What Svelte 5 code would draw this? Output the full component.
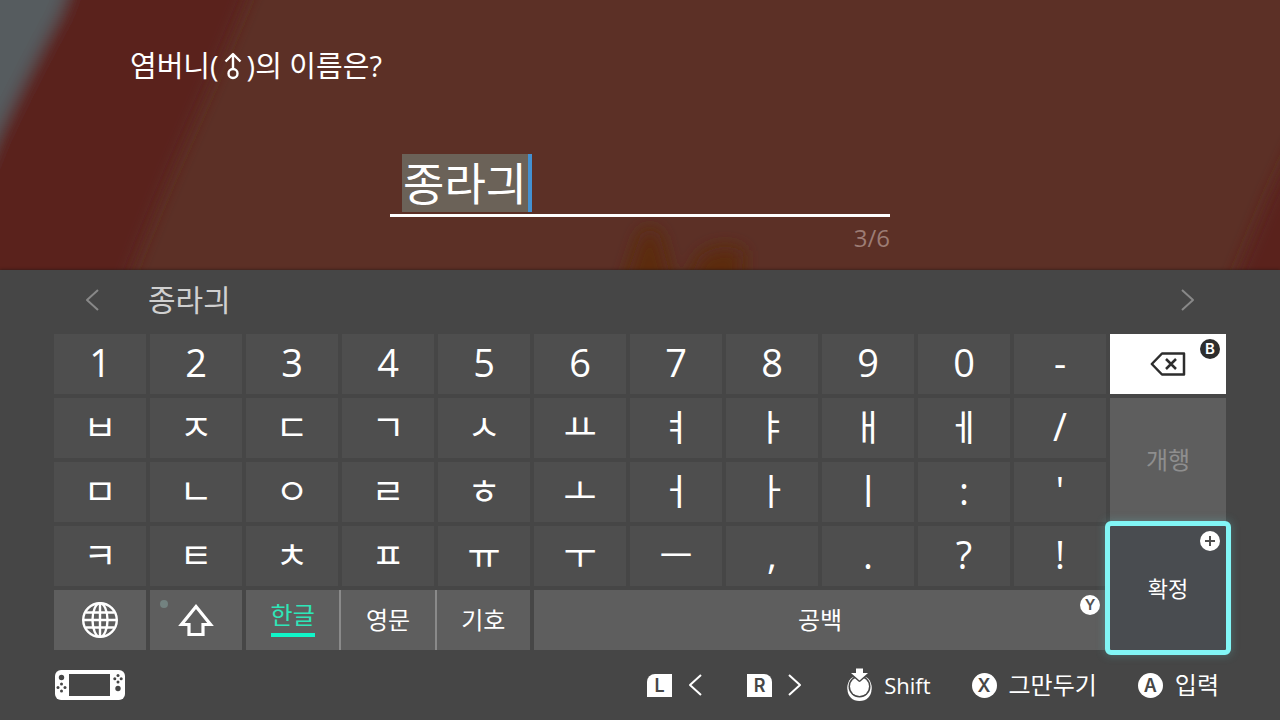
<script>
	const maxLength = 6;

	const rows = [
		['1', '2', '3', '4', '5', '6', '7', '8', '9', '0', '-'],
		['ㅂ', 'ㅈ', 'ㄷ', 'ㄱ', 'ㅅ', 'ㅛ', 'ㅕ', 'ㅑ', 'ㅐ', 'ㅔ', '/'],
		['ㅁ', 'ㄴ', 'ㅇ', 'ㄹ', 'ㅎ', 'ㅗ', 'ㅓ', 'ㅏ', 'ㅣ', ':', "'"],
		['ㅋ', 'ㅌ', 'ㅊ', 'ㅍ', 'ㅠ', 'ㅜ', 'ㅡ', ',', '.', '?', '!']
	];

	const modes = ['한글', '영문', '기호'];

	let name = $state('종라긔');
	let mode = $state('한글');

	function type(key) {
		if (name.length < maxLength) {
			name += key;
		}
	}

	function erase() {
		name = name.slice(0, -1);
	}

	function isLatin(key) {
		return key.charCodeAt(0) < 128;
	}
</script>

{#snippet chevron(d)}
	<svg class="Chevron" viewBox="0 0 22 24" aria-hidden="true"><path {d} /></svg>
{/snippet}

<main class="Screen">
	<section class="Prompt">
		<svg class="Backdrop" viewBox="0 0 1280 270" preserveAspectRatio="none" aria-hidden="true">
			<defs>
				<filter id="soft" x="-20%" y="-20%" width="140%" height="140%">
					<feGaussianBlur stdDeviation="8" />
				</filter>
			</defs>
			<rect width="1280" height="270" fill="#5c3026" />
			<g filter="url(#soft)">
				<path d="M-40-40H262Q226 50 190 130T116 310H-40z" fill="#5a231f" />
				<path d="M-40-40H80L60 14Q20 88-2 136L-40 230z" fill="#565b5e" />
				<path d="M1310 110L1270 195 1222 310H1320z" fill="#5a231f" />
				<path d="M622 290L640 236Q650 222 660 236L674 290z" fill="#5b2a0c" />
				<path d="M684 290L700 256Q722 240 744 252L740 290z" fill="#5b2a0c" />
			</g>
		</svg>

		<label class="Question" for="name">
			염버니(<svg class="Male" viewBox="0 0 20 28" role="img" aria-label="수컷"
				><path d="M10 17V2M2.5 9.5L10 2L17.5 9.5" /><circle cx="10" cy="21.5" r="4.5" /></svg
			>)의 이름은?
		</label>

		<div class="Field">
			<div class="Field-line">
				<input id="name" type="text" maxlength={maxLength} autocomplete="off" bind:value={name} />
			</div>
			<span class="Field-count">{name.length}/{maxLength}</span>
		</div>
	</section>

	<section class="Keyboard">
		<div class="Candidates">
			<button type="button" class="Arrow" aria-label="이전">{@render chevron('M17 2L6 12L17 22')}</button>
			<button type="button" class="Candidate">{name}</button>
			<button type="button" class="Arrow" aria-label="다음">{@render chevron('M5 2L16 12L5 22')}</button>
		</div>

		<div class="Keys">
			{#each rows as row}
				{#each row as key}
					<button type="button" class="Key" class:is-latin={isLatin(key)} onclick={() => type(key)}>{key}</button>
				{/each}
			{/each}

			<button type="button" class="Key Key--erase" aria-label="지우기" onclick={erase}>
				<svg class="Erase" viewBox="0 0 36 24" aria-hidden="true">
					<path d="M12 1.5H34V22.5H12L1.8 12z" />
					<path d="M16 7L26 17M26 7L16 17" />
				</svg>
				<span class="Badge">B</span>
			</button>
			<button type="button" class="Key Key--action Key--enter" disabled>개행</button>
			<button type="button" class="Key Key--confirm">
				확정
				<span class="Badge">
					<svg viewBox="0 0 20 20" aria-hidden="true"><path d="M10 5V15M5 10H15" /></svg>
				</span>
			</button>

			<button type="button" class="Key Key--action" aria-label="언어">
				<svg class="Globe" viewBox="0 0 38 38" aria-hidden="true">
					<circle cx="19" cy="19" r="16.8" />
					<ellipse cx="19" cy="19" rx="7.5" ry="16.8" />
					<path d="M19 2V36M2 19H36M5 11.5H33M5 26.5H33" />
				</svg>
			</button>
			<button type="button" class="Key Key--action" aria-label="Shift">
				<span class="Lamp"></span>
				<svg class="Shift" viewBox="0 0 38 34" aria-hidden="true">
					<path d="M19 3.5L33.5 21.5H26V31.5H12V21.5H4.5z" />
				</svg>
			</button>
			<div class="Modes">
				{#each modes as item}
					<button
						type="button"
						class="Key Key--action"
						class:is-active={mode === item}
						aria-pressed={mode === item}
						onclick={() => (mode = item)}><span>{item}</span></button
					>
				{/each}
			</div>
			<button type="button" class="Key Key--action Key--space" onclick={() => type(' ')}>
				공백
				<span class="Badge">Y</span>
			</button>
		</div>

		<footer class="Footer">
			<svg class="Console" viewBox="0 0 70 30" role="img" aria-label="본체">
				<rect width="70" height="30" rx="6" fill="#fff" />
				<g fill="#464646">
					<rect x="14" y="4" width="41" height="22" />
					<circle cx="6.5" cy="7.5" r="2.7" />
					<circle cx="63" cy="18.5" r="2.7" />
					<circle cx="6.5" cy="14" r="1.5" />
					<circle cx="6.5" cy="21" r="1.5" />
					<circle cx="3" cy="17.5" r="1.5" />
					<circle cx="10" cy="17.5" r="1.5" />
					<circle cx="63" cy="5.5" r="1.5" />
					<circle cx="63" cy="12" r="1.5" />
					<circle cx="59.8" cy="8.7" r="1.5" />
					<circle cx="66.2" cy="8.7" r="1.5" />
				</g>
			</svg>

			<div class="Hints">
				<button type="button" class="Hint" aria-label="왼쪽">
					<span class="Shoulder Shoulder--l">L</span>
					{@render chevron('M17 2L6 12L17 22')}
				</button>
				<button type="button" class="Hint" aria-label="오른쪽">
					<span class="Shoulder Shoulder--r">R</span>
					{@render chevron('M5 2L16 12L5 22')}
				</button>
				<button type="button" class="Hint Hint--latin">
					<svg class="Stick" viewBox="0 0 25 34" aria-hidden="true">
						<path d="M.8 17.500C-1 27 4.500 33 12.500 33S26 27 24.200 17.500" fill="#fff" />
						<circle cx="12.5" cy="19" r="12" fill="#fff" />
						<circle cx="12.5" cy="18.5" r="11" fill="#464646" />
						<circle cx="12.5" cy="18.5" r="9.5" fill="#fff" />
						<path
							d="M9 .5H16V5H21L12.5 12.5L4 5H9z"
							fill="#fff"
							stroke="#464646"
							stroke-width="3"
							paint-order="stroke"
						/>
					</svg>
					Shift
				</button>
				<button type="button" class="Hint"><span class="Round">X</span>그만두기</button>
				<button type="button" class="Hint"><span class="Round">A</span>입력</button>
			</div>
		</footer>
	</section>
</main>

<style>
	:global(body) {
		background: #464646;
	}

	.Screen {
		min-height: 100vh;
		display: flex;
		flex-direction: column;
		color: #fff;
		font-family: 'Open Sans', 'Noto Sans CJK KR', sans-serif;
		font-size: 24px;
	}

	button,
	input {
		margin: 0;
		padding: 0;
		border: 0;
		background: none;
		color: inherit;
		font: inherit;
	}

	button {
		cursor: pointer;
	}

	svg {
		display: block;
		fill: none;
		stroke-linejoin: round;
	}

	.Prompt {
		position: relative;
		overflow: hidden;
		padding: 48px 54px 16px;
	}

	.Backdrop {
		position: absolute;
		inset: 0;
		width: 100%;
		height: 100%;
		z-index: -1;
	}

	.Question {
		display: flex;
		align-items: center;
		padding-inline-start: 76px;
		font-size: 29px;
		line-height: 36px;
		white-space: pre;
	}

	.Male {
		width: 20px;
		height: 28px;
		margin: 0 4px;
		stroke: #fff;
		stroke-width: 2.4;
	}

	.Field {
		width: 500px;
		margin: 70px auto 0;
		display: flex;
		flex-direction: column;
	}

	.Field-line {
		padding: 0 12px 2px;
		border-bottom: 3px solid #fff;
	}

	.Field input {
		display: block;
		box-sizing: border-box;
		height: 58px;
		max-width: 100%;
		padding: 0 1px 4px;
		field-sizing: content;
		background: #6b6258;
		border-inline-end: 4px solid #4390d0;
		font-size: 45px;
		outline: none;
	}

	.Field-count {
		align-self: flex-end;
		margin-top: 4px;
		line-height: 33px;
		color: #9c7c74;
	}

	.Keyboard {
		flex: 1;
		display: flex;
		flex-direction: column;
		padding: 0 54px;
		background: #464646;
		box-shadow: 0 0 3px rgba(30, 20, 20, 0.8);
	}

	.Candidates {
		display: flex;
		align-items: center;
		height: 60px;
		margin-bottom: 4px;
		padding: 0 27px;
	}

	.Candidate {
		margin-inline: 45px auto;
		padding-bottom: 4px;
		font-size: 30px;
		color: #d0d0d0;
	}

	.Chevron {
		width: 22px;
		height: 24px;
		stroke: currentColor;
		stroke-width: 2;
	}

	.Arrow {
		color: #888;
	}

	.Keys {
		display: grid;
		grid-template-columns: repeat(11, 1fr) 116px;
		grid-template-rows: repeat(5, 60px);
		gap: 4px;
	}

	.Key {
		position: relative;
		display: flex;
		align-items: center;
		justify-content: center;
		background: #4e4e4e;
		font-size: 36px;
		line-height: 1;
	}

	.Key.is-latin {
		padding-bottom: 4px;
		font-size: 38px;
	}

	.Key--action {
		background: #5e5e5e;
		font-size: 24px;
	}

	.Key--erase {
		grid-area: 1 / 12;
		background: #fff;
	}

	.Key--enter {
		grid-area: 2 / 12 / 4 / 13;
		color: #8e8e8e;
	}

	.Key--confirm {
		grid-area: 4 / 12 / 6 / 13;
		z-index: 1;
		background: #494c50;
		outline: 5px solid #82f6f6;
		border-radius: 1px;
		box-shadow: 0 0 10px 5px rgba(100, 230, 230, 0.25);
		font-size: 22px;
	}

	.Key--space {
		grid-column: 6 / 12;
	}

	.Modes {
		grid-column: 3 / 6;
		display: grid;
		grid-template-columns: repeat(3, 1fr);
		gap: 2px;
		background: #8a8a8a;
	}

	.is-active span {
		padding-bottom: 6px;
		border-bottom: 4px solid #10f5c8;
		color: #2ee6b8;
	}

	.Badge {
		position: absolute;
		top: 5px;
		right: 6px;
		width: 20px;
		height: 20px;
		border-radius: 50%;
		background: #fff;
		color: #505050;
		font: 600 15px/20px Inter, sans-serif;
		text-align: center;
	}

	.Badge path {
		stroke: currentColor;
		stroke-width: 2;
	}

	.Key--erase .Badge {
		background: #2d2d2d;
		color: #fff;
	}

	.Erase {
		width: 36px;
		height: 24px;
		stroke: #2d2d2d;
		stroke-width: 2.5;
	}

	.Globe {
		width: 38px;
		height: 38px;
		stroke: #fff;
		stroke-width: 2.4;
	}

	.Shift {
		width: 38px;
		height: 34px;
		stroke: #fff;
		stroke-width: 3.2;
		stroke-linejoin: miter;
	}

	.Lamp {
		position: absolute;
		top: 10px;
		left: 10px;
		width: 8px;
		height: 8px;
		border-radius: 50%;
		background: #738280;
	}

	.Footer {
		flex: 1;
		display: flex;
		align-items: center;
		justify-content: space-between;
		min-height: 68px;
		padding-inline: 1px 7px;
	}

	.Console {
		width: 70px;
		height: 30px;
	}

	.Hints {
		display: flex;
		align-items: center;
		gap: 41px;
	}

	.Hint {
		display: flex;
		align-items: center;
		gap: 12px;
		line-height: 36px;
	}

	.Hint--latin {
		font-size: 22px;
	}

	.Shoulder,
	.Round {
		width: 25px;
		background: #fff;
		color: #464646;
		font: 600 18px/23px Inter, sans-serif;
		text-align: center;
	}

	.Shoulder--l {
		border-start-start-radius: 8px;
	}

	.Shoulder--r {
		border-start-end-radius: 8px;
	}

	.Round {
		border-radius: 50%;
		line-height: 25px;
	}

	.Stick {
		width: 25px;
		height: 34px;
	}
</style>
